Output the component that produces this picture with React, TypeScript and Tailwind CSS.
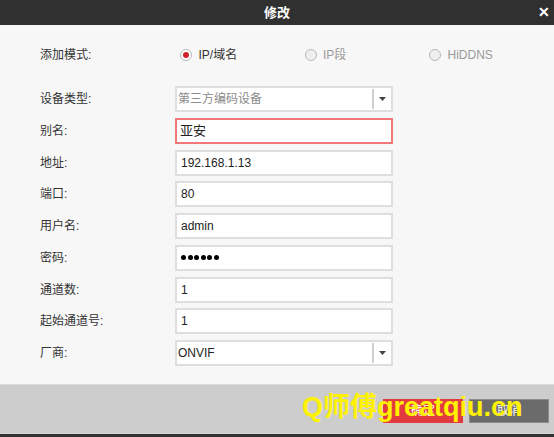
import React from "react";

const font = { fontFamily: '"Liberation Sans", "Noto Sans CJK SC", sans-serif' };

function Radio({ label, checked }: { label: string; checked?: boolean }) {
  return (
    <div className="flex items-center gap-[6px] w-[125px]">
      <span
        className={`flex items-center justify-center w-[12px] h-[12px] rounded-full border border-[#b8b8b8] ${
          checked ? "bg-white" : "bg-[#efefef]"
        }`}
      >
        {checked && <span className="w-[6px] h-[6px] rounded-full bg-[#d1222c]" />}
      </span>
      <span className={`text-[12px] ${checked ? "text-[#333]" : "text-[#9a9a9a]"}`}>{label}</span>
    </div>
  );
}

function Field({ children, red }: { children: React.ReactNode; red?: boolean }) {
  return (
    <div
      className={`h-[26px] w-[218px] bg-white border-2 flex items-center ${
        red ? "border-[#f07878]" : "border-[#dedede]"
      }`}
    >
      {children}
    </div>
  );
}

function Select({ value, gray }: { value: string; gray?: boolean }) {
  return (
    <div className="h-[26px] w-[218px] bg-white border-2 border-[#dedede] flex items-center">
      <span className={`flex-1 pl-[1px] text-[12px] ${gray ? "text-[#8a8a8a]" : "text-[#222]"}`}>{value}</span>
      <span className="w-[2px] h-[20px] bg-[#cfcfcf]" />
      <span className="w-[17px] flex justify-center">
        <svg width="7" height="4" viewBox="0 0 7 4">
          <path d="M0 0 L7 0 L3.5 4 Z" fill="#444" />
        </svg>
      </span>
    </div>
  );
}

export default function App() {
  const rows: { label: string; el: React.ReactNode }[] = [
    { label: "设备类型:", el: <Select value="第三方编码设备" gray /> },
    {
      label: "别名:",
      el: (
        <Field red>
          <span className="pl-[3px] text-[13px] text-[#222]">亚安</span>
        </Field>
      ),
    },
    {
      label: "地址:",
      el: (
        <Field>
          <span className="pl-[4px] text-[12px] text-[#222]">192.168.1.13</span>
        </Field>
      ),
    },
    {
      label: "端口:",
      el: (
        <Field>
          <span className="pl-[4px] text-[12px] text-[#222]">80</span>
        </Field>
      ),
    },
    {
      label: "用户名:",
      el: (
        <Field>
          <span className="pl-[4px] text-[12px] text-[#222]">admin</span>
        </Field>
      ),
    },
    {
      label: "密码:",
      el: (
        <Field>
          <span className="pl-[4px] flex gap-[1.5px]">
            {[0, 1, 2, 3, 4, 5].map((i) => (
              <span key={i} className="w-[5px] h-[5px] rounded-full bg-black" />
            ))}
          </span>
        </Field>
      ),
    },
    {
      label: "通道数:",
      el: (
        <Field>
          <span className="pl-[4px] text-[12px] text-[#222]">1</span>
        </Field>
      ),
    },
    {
      label: "起始通道号:",
      el: (
        <Field>
          <span className="pl-[4px] text-[12px] text-[#222]">1</span>
        </Field>
      ),
    },
    { label: "厂商:", el: <Select value="ONVIF" /> },
  ];

  return (
    <div className="w-[554px] h-[437px] flex flex-col bg-[#f7f7f7] relative overflow-hidden" style={font}>
      <div className="h-[25px] bg-[#303030] flex items-center justify-center relative">
        <span className="text-white text-[13px] font-bold">修改</span>
        <span className="absolute right-[4px] top-[3px] text-white text-[14px] font-bold leading-[18px]">✕</span>
      </div>
      <div className="flex-1 flex flex-col pl-[40px] pt-[22px]">
        <div className="flex items-center h-[16px]">
          <span className="w-[141px] text-[12px] text-[#333]">添加模式:</span>
          <Radio label="IP/域名" checked />
          <Radio label="IP段" />
          <Radio label="HiDDNS" />
        </div>
        <div className="flex flex-col gap-[5.75px] mt-[23px]">
          {rows.map((r) => (
            <div key={r.label} className="flex items-center">
              <span className="w-[135px] text-[12px] text-[#333]">{r.label}</span>
              {r.el}
            </div>
          ))}
        </div>
      </div>
      <div className="h-[49px] bg-[#cdcdcd] border-t border-[#dadada] flex justify-end items-start pt-[14px] pr-[5px] gap-[6px]">
        <div className="w-[80px] h-[24px] bg-[#e23a40] flex items-center justify-center text-white text-[12px]">确定</div>
        <div className="w-[80px] h-[24px] bg-[#6b6b6b] border border-[#8c8c8c] flex items-center justify-center text-white text-[12px]">
          取消
        </div>
      </div>
      <div className="h-[1px] bg-[#d8d8d8]" />
      <div className="h-[3px] bg-[#333]" />
      <div
        className="absolute left-[302px] top-[394px] text-[27px] font-bold leading-none text-[#fff200] whitespace-nowrap"
        style={font}
      >
        Q师傅greatqiu.cn
      </div>
    </div>
  );
}
